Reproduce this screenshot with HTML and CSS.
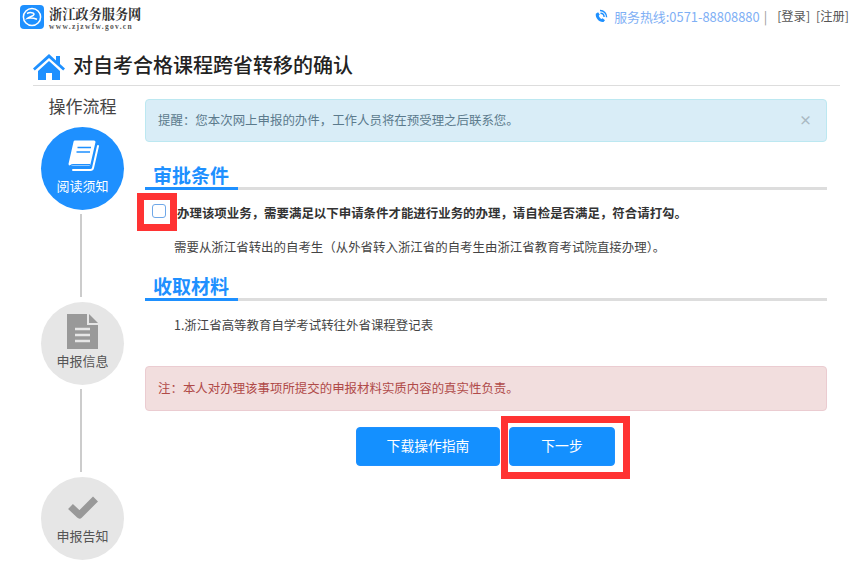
FILE: index.html
```html
<!DOCTYPE html>
<html lang="zh-CN">
<head>
<meta charset="utf-8">
<title>对自考合格课程跨省转移的确认</title>
<link rel="stylesheet" href="styles.css">
</head>
<body>
<header class="top">
  <div class="brand">
    <svg class="logo" viewBox="0 0 24 24" width="24" height="24"><rect width="24" height="24" rx="4" fill="#1e90ff"/><circle cx="12" cy="12" r="8.6" fill="none" stroke="#fff" stroke-width="1.5"/><path d="M7 8.500c3-1.500 7-1 7 .8 0 2-5 2.500-6.500 4 3-.8 6-.5 9.500 1" fill="none" stroke="#fff" stroke-width="1.500"/></svg>
    <div class="brand-text">
      <div class="brand-name">浙江政务服务网</div>
      <div class="brand-url">www.zjzwfw.gov.cn</div>
    </div>
  </div>
  <div class="links">
    <svg class="phone" viewBox="0 0 14 14" width="14" height="14"><path d="M1.800 4.800C1.200 9 5 13.500 9.500 13l1.500-1.800-2.400-2-1 .9C6.200 9.500 5 8 4.800 6.600l1-.9-1.700-2.500z" fill="#1e90ff"/><path d="M6 1.500a6.500 6.500 0 0 1 6.600 6.800M6.500 4.200a3.800 3.800 0 0 1 3.600 3.800" fill="none" stroke="#1e90ff" stroke-width="1.400"/></svg>
    <span class="hotline">服务热线:0571-88808880</span>
    <span class="sep">|</span>
    <span class="auth">[登录]</span>
    <span class="auth">[注册]</span>
  </div>
</header>
<div class="title-row">
  <svg class="home" viewBox="0 0 32 26" width="32" height="26"><path d="M16 0 0 14.500l1.800 2L16 4l14.200 12.500 1.800-2-5-4.500V2h-4v4.500z" fill="#1e90ff"/><path d="M5 17 16 7l11 10v9h-8v-7h-6v7H5z" fill="#1e90ff"/></svg>
  <h1>对自考合格课程跨省转移的确认</h1>
</div>
<div class="layout">
  <aside class="steps">
    <div class="steps-title">操作流程</div>
    <div class="step active">
      <div class="step-icon"><svg viewBox="0 0 34 33" width="34" height="33"><path d="M9 2h19l-5 22H4z" fill="#fff" stroke="#fff" stroke-width="3" stroke-linejoin="round"/><path d="M32 6 27 28q-.5 2-2.500 2H7" fill="none" stroke="#fff" stroke-width="2" stroke-linecap="round"/><path d="M11.500 7.500H25M10.500 12H24" stroke="#1e90ff" stroke-width="1.500"/><path d="M3.500 29c0-3 2-4.500 4-4.500H24" fill="none" stroke="#1e90ff" stroke-width="1.200"/></svg></div>
      <span>阅读须知</span>
    </div>
    <div class="line"></div>
    <div class="step">
      <div class="step-icon"><svg viewBox="0 0 31 35" width="31" height="35"><path d="M0 0h20v11h11v24H0z" fill="#999"/><path d="M22 0l9 9h-9z" fill="#999"/><path d="M8 15h15M8 21h15M8 27h15" stroke="#e6e6e6" stroke-width="2.500"/></svg></div>
      <span>申报信息</span>
    </div>
    <div class="line"></div>
    <div class="step">
      <div class="step-icon"><svg viewBox="0 0 32 24" width="32" height="24"><path d="M3.500 11.500l9 8.500L28.500 4" fill="none" stroke="#999" stroke-width="7" stroke-linejoin="round"/></svg></div>
      <span>申报告知</span>
    </div>
  </aside>
  <main class="main">
    <div class="alert info">
      <span>提醒：您本次网上申报的办件，工作人员将在预受理之后联系您。</span>
      <span class="close">×</span>
    </div>
    <section class="sec first">
      <h2><span>审批条件</span></h2>
      <div class="check-row">
        <span class="checkbox"></span>
        <strong>办理该项业务，需要满足以下申请条件才能进行业务的办理，请自检是否满足，符合请打勾。</strong>
      </div>
      <p class="cond">需要从浙江省转出的自考生（从外省转入浙江省的自考生由浙江省教育考试院直接办理）。</p>
    </section>
    <section class="sec second">
      <h2><span>收取材料</span></h2>
      <p class="mat">1.浙江省高等教育自学考试转往外省课程登记表</p>
    </section>
    <div class="alert danger">注：本人对办理该事项所提交的申报材料实质内容的真实性负责。</div>
    <div class="actions">
      <button class="btn guide">下载操作指南</button>
      <button class="btn next">下一步</button>
    </div>
  </main>
</div>
<div class="mark mark-check"></div>
<div class="mark mark-next"></div>
</body>
</html>
```
FILE: styles.css
```css
* { box-sizing: border-box; }
html, body { margin: 0; padding: 0; }
body {
  position: relative;
  width: 868px;
  height: 575px;
  overflow: hidden;
  background: #fff;
  color: #333;
  font-family: "Noto Sans CJK SC", "Liberation Sans", sans-serif;
  font-size: 12.450px;
}
.top {
  display: flex;
  justify-content: space-between;
  height: 50px;
  padding: 5px 19px 0 20px;
}
.brand { display: flex; gap: 5px; align-items: flex-start; }
.logo { display: block; }
.brand-text { padding-top: 1px; }
.brand-name {
  font-family: "Noto Serif CJK SC", "Noto Sans CJK SC", serif;
  font-size: 13.200px;
  font-weight: 700;
  line-height: 16px;
  color: #333;
}
.brand-url {
  font-family: "Liberation Serif", serif;
  font-size: 7.500px;
  font-weight: 700;
  letter-spacing: 1.300px;
  line-height: 9px;
  color: #555;
}
.links {
  display: flex;
  align-items: center;
  height: 22px;
  font-size: 12.900px;
}
.phone { margin-right: 6px; }
.hotline { color: #7fb0f5; }
.sep { color: #999; margin: 0 10px 0 4px; }
.auth { color: #555; font-size: 12.300px; }
.auth + .auth { margin-left: 6px; }
.title-row {
  display: flex;
  align-items: center;
  gap: 8px;
  height: 36px;
  margin: 0 28px 0 33px;
  padding-bottom: 5px;
  border-bottom: 1px solid #ddd;
}
.home { display: block; margin-top: 4px; }
h1 {
  margin: 0;
  font-size: 20px;
  font-weight: 500;
  line-height: 28px;
  color: #222;
}
.layout { display: flex; padding-left: 41px; }
.steps {
  display: flex;
  flex-direction: column;
  align-items: center;
  width: 83px;
  flex: none;
}
.steps-title {
  height: 41px;
  padding-top: 8px;
  font-size: 17px;
  line-height: 24px;
  color: #444;
  white-space: nowrap;
}
.step {
  display: flex;
  flex-direction: column;
  align-items: center;
  gap: 2px;
  width: 83px;
  height: 83px;
  padding-top: 11px;
  flex: none;
  border-radius: 50%;
  background: #e6e6e6;
  color: #555;
  font-size: 13px;
  line-height: 18px;
}
.step-icon {
  display: flex;
  align-items: center;
  justify-content: center;
  height: 37px;
}
.step-icon svg { display: block; }
.step.active { background: #1e90ff; color: #fff; }
.line {
  width: 2px;
  height: 83px;
  margin: 4px 0 5px;
  background: #ccc;
  flex: none;
  transform: translateX(-2px);
}
.main { width: 682px; margin-left: 21px; padding-top: 13px; }
.alert {
  border-radius: 4px;
  border: 1px solid;
  padding-left: 12px;
}
.info {
  display: flex;
  justify-content: space-between;
  align-items: center;
  height: 43px;
  padding-right: 14px;
  padding-bottom: 2px;
  background: #d9edf7;
  border-color: #bce8f1;
  color: #5b7a8c;
}
.close { font-size: 13px; font-weight: 700; color: #a9b9c2; }
.sec h2 {
  margin: 0;
  height: 27px;
  border-bottom: 3px solid #ddd;
  font-size: 19px;
  font-weight: 700;
  line-height: 23px;
  color: #1e90ff;
}
.sec h2 span {
  display: inline-block;
  height: 27px;
  width: 93px;
  padding-left: 8px;
  border-bottom: 3px solid #1e90ff;
}
.first { margin-top: 21px; }
.check-row {
  display: flex;
  align-items: center;
  gap: 11px;
  margin-top: 14px;
  padding-left: 7px;
  height: 18px;
}
.checkbox {
  width: 14px;
  height: 14px;
  margin-top: -4px;
  border: 1.500px solid #6fa8e8;
  border-radius: 3px;
  background: #fff;
  flex: none;
}
.check-row strong {
  font-weight: 700;
  color: #333;
  white-space: nowrap;
}
.cond {
  margin: 16px 0 0 29px;
  line-height: 18px;
  white-space: nowrap;
  color: #444;
}
.second { margin-top: 18px; }
.mat {
  margin: 15px 0 0 29px;
  line-height: 18px;
  color: #444;
}
.danger {
  display: flex;
  align-items: center;
  height: 45px;
  margin-top: 32px;
  padding-bottom: 2px;
  background: #f2dede;
  border-color: #ebccd1;
  color: #b04a48;
}
.actions {
  display: flex;
  gap: 9px;
  margin-top: 16px;
  padding-left: 211px;
}
.btn {
  height: 39px;
  border: 1px solid #1e90ff;
  border-radius: 4px;
  background: #1490ff;
  color: #fff;
  font-family: inherit;
  font-size: 13.800px;
  padding: 0 0 3px;
}
.guide { width: 144px; }
.next { width: 106px; }
.mark { position: absolute; border: 7px solid #ff3333; }
.mark-check { left: 137px; top: 193px; width: 40px; height: 38px; }
.mark-next { left: 501px; top: 416px; width: 129px; height: 63px; }
```
